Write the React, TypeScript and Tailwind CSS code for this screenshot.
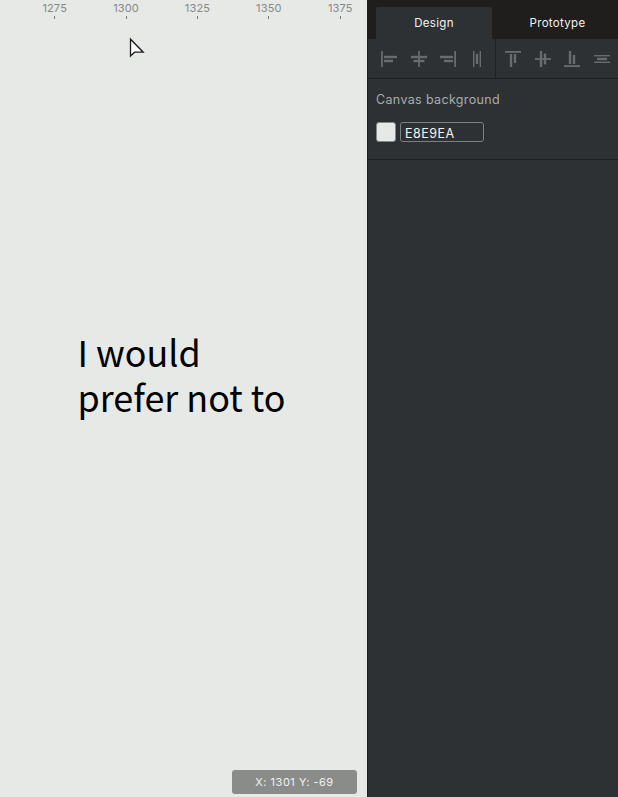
import React from "react";

type Rect = [number, number, number, number];
type IconSpec = { name: string; gap: string; rects: Rect[] };

const horizontal: IconSpec[] = [
  { name: "Align left", gap: "ml-[13px]", rects: [[0, 0, 1.8, 16], [3, 4.8, 13, 2.4], [3, 8.8, 9, 2.4]] },
  { name: "Align horizontal center", gap: "ml-[14px]", rects: [[7.1, 0, 1.8, 16], [0, 4.8, 16, 2.4], [2.5, 8.8, 11, 2.4]] },
  { name: "Align right", gap: "ml-[13px]", rects: [[14.2, 0, 1.8, 16], [0, 4.8, 13, 2.4], [4, 8.8, 9, 2.4]] },
  { name: "Distribute horizontally", gap: "ml-[13px]", rects: [[4, 0, 1.4, 16], [10.6, 0, 1.4, 16], [6.8, 3, 2.4, 10]] },
];

const vertical: IconSpec[] = [
  { name: "Align top", gap: "ml-[9px]", rects: [[0, 0, 16, 1.8], [4.8, 3, 2.4, 13], [8.8, 3, 2.4, 9]] },
  { name: "Align vertical center", gap: "ml-[14px]", rects: [[0, 7.1, 16, 1.8], [4.8, 0, 2.4, 16], [8.8, 2.5, 2.4, 11]] },
  { name: "Align bottom", gap: "ml-[13px]", rects: [[0, 14.2, 16, 1.8], [4.8, 0, 2.4, 13], [8.8, 4, 2.4, 9]] },
  { name: "Distribute vertically", gap: "ml-[14px]", rects: [[0, 4, 16, 1.4], [0, 10.6, 16, 1.4], [3, 6.8, 10, 2.4]] },
];

function AlignIcons({ icons }: { icons: IconSpec[] }) {
  return (
    <>
      {icons.map((icon) => (
        <button key={icon.name} aria-label={icon.name} className={`shrink-0 ${icon.gap}`}>
          <svg width="16" height="16" viewBox="0 0 16 16" fill="#686c6f">
            {icon.rects.map(([x, y, w, h]) => (
              <rect key={`${x}-${y}`} x={x} y={y} width={w} height={h} />
            ))}
          </svg>
        </button>
      ))}
    </>
  );
}

function Ruler() {
  return (
    <div className="flex h-5 pl-[19px] text-[11px] leading-4 tracking-[0.15px] text-[#85888b]">
      {["1275", "1300", "1325", "1350", "1375"].map((n) => (
        <div key={n} className="flex w-[71.4px] shrink-0 flex-col items-center">
          <span className="h-4">{n}</span>
          <span className="h-[3px] w-px bg-[#75797c]" />
        </div>
      ))}
    </div>
  );
}

export default function App() {
  return (
    <div className="flex h-[797px] w-[618px] overflow-hidden bg-[#e7e9e6] font-['Inter','Liberation_Sans',sans-serif]">
      <main className="relative w-[367px] shrink-0 overflow-hidden">
        <Ruler />
        <p className="absolute left-[77.5px] top-[329px] whitespace-nowrap font-['Noto_Sans_CJK_SC',sans-serif] text-[35.9px] leading-[45px] text-black">
          I would
          <br />
          prefer not to
        </p>
        <svg className="absolute left-[129px] top-[37px]" width="17" height="22" viewBox="0 0 17 22">
          <path d="M1.5 2.2V19L5.6 15.2H14.2Z" fill="#fff" stroke="#1b1b20" strokeWidth="1.3" />
        </svg>
        <div className="absolute bottom-[3px] left-[232px] flex h-6 w-[125px] items-center justify-center rounded-[3px] bg-[#8a8c89] text-[11px] tracking-[0.5px] text-[#f1f2f1]">
          X: 1301 Y: -69
        </div>
      </main>

      <aside className="flex w-[251px] shrink-0 flex-col border-l border-[#1f2021] bg-[#2d3134]">
        <div className="flex h-[39px] shrink-0 bg-[#1f1e1c] pl-2 pt-[7px] text-[11.5px] tracking-[0.3px] text-[#f2f3f3]">
          <button className="h-8 w-[116px] rounded-t-[2px] bg-[#2d3134] pt-0.5">Design</button>
          <button className="h-8 flex-1 pl-[5px] pt-0.5">Prototype</button>
        </div>
        <div className="flex h-10 shrink-0 border-b border-[#1f2021]">
          <div className="flex w-[128px] items-start border-r border-[#1f2021] pt-3">
            <AlignIcons icons={horizontal} />
          </div>
          <div className="flex flex-1 items-start pt-3">
            <AlignIcons icons={vertical} />
          </div>
        </div>
        <section className="h-[81px] shrink-0 border-b border-[#1f2021] pl-2 pt-[11px]">
          <h2 className="text-[12.5px] leading-5 tracking-[0.35px] text-[#a9acae]">Canvas background</h2>
          <div className="mt-3 flex gap-1">
            <span className="h-5 w-5 rounded-[3px] border border-[#85898b] bg-[#e7e9e6]" />
            <div className="flex h-5 w-[84px] items-center rounded-[3px] border border-[#7b8083] pl-1 pt-[3px] text-[12.5px] leading-4 tracking-[0.5px] text-[#f3f4f4]">
              E8E9EA
            </div>
          </div>
        </section>
      </aside>
    </div>
  );
}
